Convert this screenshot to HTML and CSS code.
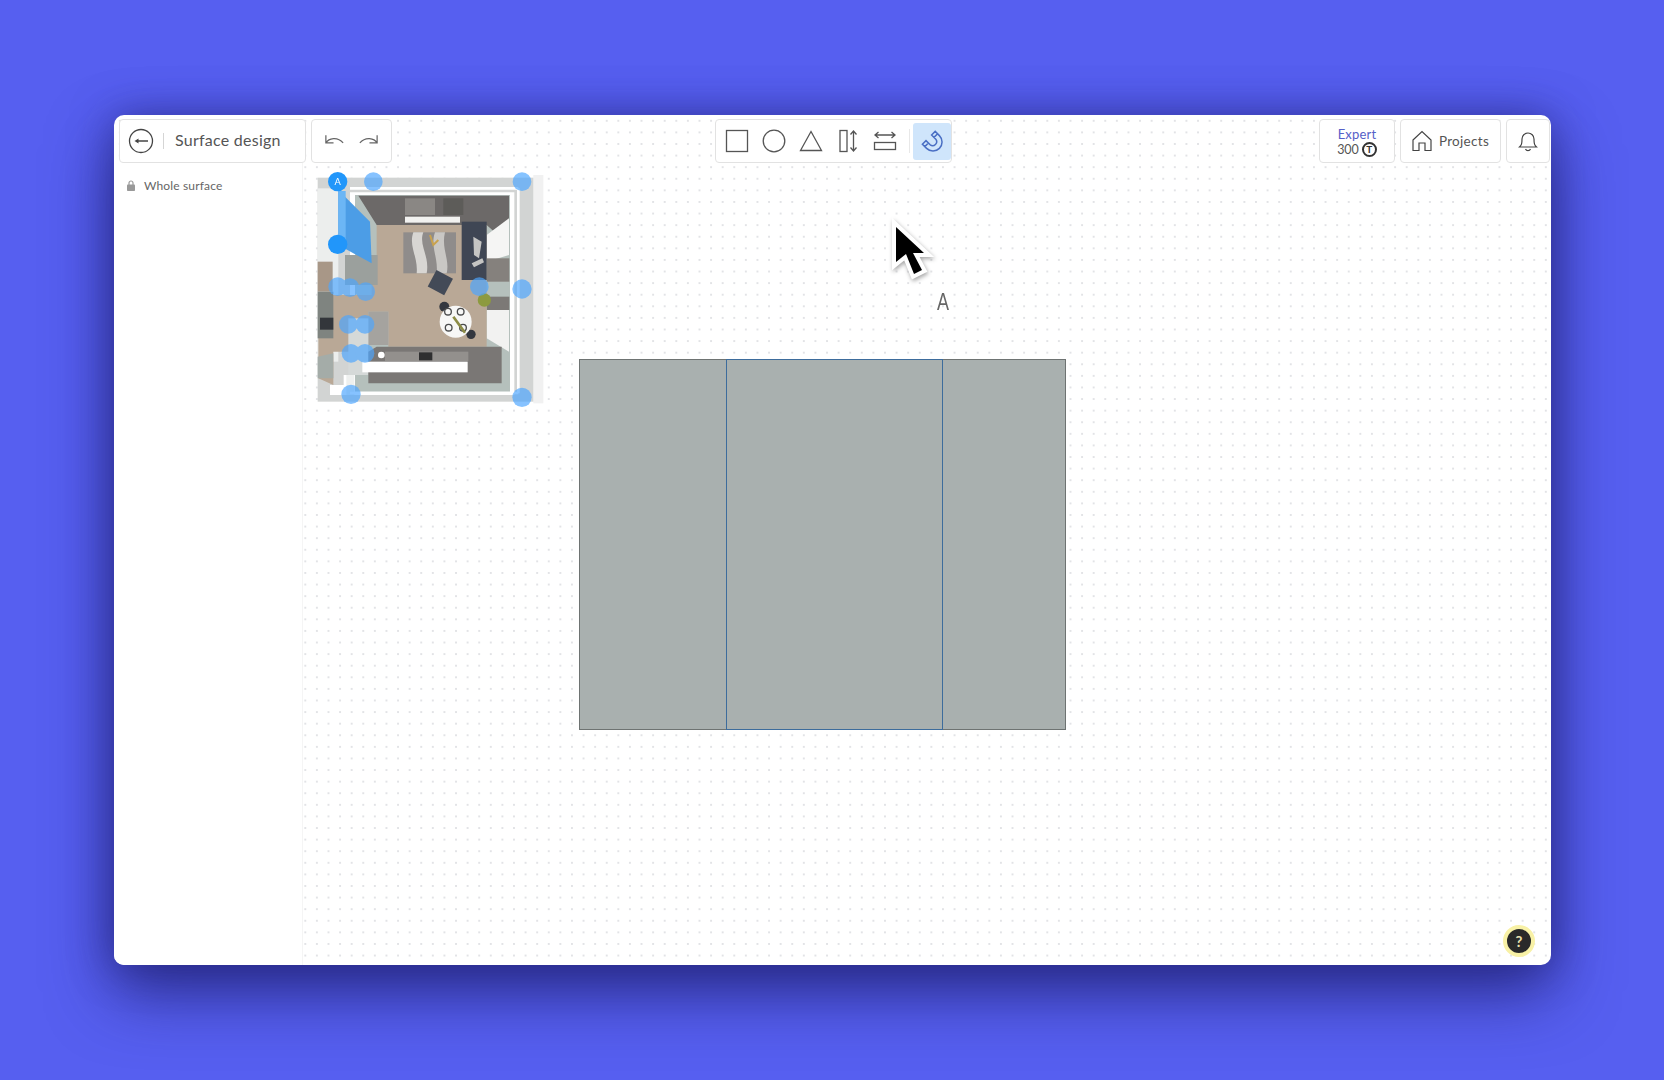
FILE: index.html
```html
<!DOCTYPE html>
<html lang="en">
<head>
<meta charset="utf-8">
<title>Surface design</title>
<link rel="stylesheet" href="styles.css">
</head>
<body>
<div class="window">
  <header class="topbar">
    <div class="group">
      <div class="panel title-panel">
        <svg class="back" viewBox="0 0 26 26"><circle cx="13" cy="13" r="11.5"/><path d="M20 13H9"/><path class="back-head" d="M6.500 13 10.500 10.500V15.500Z"/></svg>
        <span class="divider"></span>
        <span class="title">Surface design</span>
      </div>
      <div class="panel history">
        <svg class="hist" viewBox="0 0 24 16"><path d="M3 2v8h8M3 10c3-5 12-7 18 0"/></svg>
        <svg class="hist" viewBox="0 0 24 16"><path d="M21 2v8h-8M21 10c-3-5-12-7-18 0"/></svg>
      </div>
    </div>
    <div class="panel tools">
      <span class="tool"><svg viewBox="0 0 24 24"><rect x="1.500" y="1.500" width="21" height="21"/></svg></span>
      <span class="tool"><svg viewBox="0 0 24 24"><circle cx="12" cy="12" r="10.800"/></svg></span>
      <span class="tool"><svg viewBox="0 0 24 24"><path d="M12 2.500 22.500 21.500h-21z"/></svg></span>
      <span class="tool"><svg viewBox="0 0 24 24"><rect x="4" y="1.500" width="7" height="21"/><path d="M17.500 2v20M14.500 5.500 17.500 2l3 3.500M14.500 18.500l3 3.500 3-3.500"/></svg></span>
      <span class="tool"><svg viewBox="0 0 24 24"><rect x="1.500" y="13.500" width="21" height="7"/><path d="M2 6h20M5.500 3 2 6l3.500 3M18.500 3 22 6l-3.500 3"/></svg></span>
      <span class="tool-sep"></span>
      <span class="tool active"><svg viewBox="0 0 24 24"><path d="M14.200 1.400 18.400 5.600A9 9 0 0 1 5.600 18.400L1.400 14.200 5 10.600 9.200 14.800A4 4 0 0 0 14.800 9.200L10.600 5ZM16.600 3.800 13 7.400M3.800 16.600 7.400 13" transform="translate(1 1)"/></svg></span>
    </div>
    <div class="group end">
      <div class="panel expert">
        <span class="expert-name">Expert</span>
        <span class="expert-credits">300 <span class="coin">T</span></span>
      </div>
      <div class="panel projects">
        <svg class="home" viewBox="0 0 20 22"><path d="M1 10 10 1.500 19 10v10.500h-6V13H7v7.500H1z"/></svg>
        <span>Projects</span>
      </div>
      <div class="panel bell-panel">
        <svg class="bell" viewBox="0 0 20 22"><path d="M1.500 17c2-2 2.500-3 2.500-8a6 6 0 0 1 12 0c0 5 .5 6 2.500 8zM7.500 19a2.700 2.700 0 0 0 5 0"/></svg>
      </div>
    </div>
  </header>
  <main class="workspace">
    <aside class="sidebar">
      <div class="layer">
        <svg class="lock" viewBox="0 0 8 11"><path class="shackle" d="M2 5V3a2 2 0 0 1 4 0v2"/><rect y="4.500" width="8" height="6.500" rx=".8"/></svg>
        <span>Whole surface</span>
      </div>
    </aside>
    <section class="canvas">
      <svg class="plan" viewBox="0 0 735 735">
        <rect x="685" y="30" width="30" height="685" fill="#f1f1f1"/>
        <rect x="38" y="38" width="647" height="672" fill="#d2d4d3"/>
        <rect x="38" y="70" width="62" height="520" fill="#eceeed"/>
        <path d="M135 82H628V690H75V660L135 660V82Z" fill="#fff"/>
        <rect x="150" y="90" width="465" height="590" fill="#b5c0bc"/>
        <path d="M160 92H612V240L545 180H215Z" fill="#6c6968"/>
        <rect x="300" y="100" width="90" height="50" fill="#8a8784"/>
        <rect x="415" y="100" width="60" height="50" fill="#5d5c59"/>
        <rect x="300" y="155" width="165" height="18" fill="#f2f2f0"/>
        <path d="M545 210 612 160V270L545 290Z" fill="#f5f5f4"/>
        <path d="M545 435H612V560L545 520Z" fill="#f2f2f1"/>
        <rect x="545" y="280" width="68" height="70" fill="#85817d"/>
        <rect x="545" y="395" width="68" height="40" fill="#7c7976"/>
        <path d="M215 180H545V545H250V440H190V560H85V660L40 640V390H200V300L215 300Z" fill="#b9a896"/>
        <rect x="38" y="290" width="45" height="90" fill="#a89787"/>
        <rect x="38" y="380" width="47" height="140" fill="#7f8480"/>
        <rect x="45" y="458" width="40" height="36" fill="#33363b"/>
        <path d="M38 575 85 565V640H38Z" fill="#a4aca8"/>
        <rect x="120" y="270" width="98" height="90" fill="#9ba09d"/>
        <rect x="190" y="440" width="60" height="100" fill="#a5a39f"/>
        <rect x="130" y="460" width="60" height="170" fill="#d5d9d8"/>
        <rect x="120" y="630" width="28" height="60" fill="#eef0ef"/>
        <path d="M215 545H590V655H190V560Z" fill="#7a7775"/>
        <rect x="240" y="560" width="250" height="28" fill="#93908d"/>
        <rect x="342" y="562" width="40" height="24" fill="#2f2f30"/>
        <rect x="172" y="590" width="316" height="32" fill="#fff"/>
        <circle cx="229" cy="570" r="10" fill="#fff"/>
        <path d="M640 70V685M135 70H640M135 684H640M120 630V690" stroke="#fff" stroke-width="8" fill="none"/>
        <rect x="295" y="202" width="158" height="123" fill="#8f8c8b"/>
        <path d="M325 202h30c-15 40 20 70 10 123h-30c5-50-25-80-10-123z" fill="#d8d6d3"/>
        <path d="M390 202h30c-12 50 15 80 5 123h-30c5-50-20-80-5-123z" fill="#c9c7c4"/>
        <path d="M375 210l10 30 15-15" stroke="#c9a24e" stroke-width="6" fill="none"/>
        <rect x="470" y="170" width="75" height="175" fill="#3f4654"/>
        <path d="M505 215l25 15-8 50-15-10zM500 295l32-15 5 12-30 15z" fill="#c5c5c3"/>
        <rect x="378" y="325" width="56" height="56" fill="#434a57" transform="rotate(28 406 353)"/>
        <circle cx="418" cy="425" r="15" fill="#33373f"/>
        <circle cx="498" cy="508" r="14" fill="#33373f"/>
        <circle cx="452" cy="470" r="48" fill="#f7f7f6"/>
        <g fill="none" stroke="#4b4c4d" stroke-width="4">
          <circle cx="429" cy="440" r="10"/><circle cx="467" cy="440" r="10"/><circle cx="431" cy="488" r="10"/><circle cx="474" cy="488" r="10"/>
        </g>
        <path d="M445 455l35 48" stroke="#8b8b45" stroke-width="8"/>
        <circle cx="538" cy="405" r="20" fill="#8d9a3f"/>
        <path d="M100 75 195 170 200 295 100 240Z" fill="#4c9de6"/>
        <rect x="100" y="78" width="22" height="165" fill="#6cb6f5"/>
        <g class="handle-soft">
          <circle cx="205" cy="50" r="28"/><circle cx="651" cy="50" r="28"/><circle cx="98" cy="365" r="28"/><circle cx="135" cy="368" r="28"/><circle cx="182" cy="380" r="28"/><circle cx="523" cy="365" r="28"/><circle cx="651" cy="372" r="29"/><circle cx="130" cy="478" r="28"/><circle cx="180" cy="478" r="28"/><circle cx="138" cy="565" r="28"/><circle cx="180" cy="565" r="28"/><circle cx="138" cy="688" r="29"/><circle cx="651" cy="697" r="29"/>
        </g>
        <circle cx="98" cy="50" r="29" fill="#2196fa"/>
        <circle cx="98" cy="238" r="29" fill="#2196fa"/>
        <text x="98" y="60" class="handle-label">A</text>
      </svg>
      <div class="surface">
        <div class="surface-selected"></div>
      </div>
      <svg class="cursor" viewBox="0 0 120 120"><path d="M36 17V52L46 44 54 64 62 60 53 43H64Z" fill="#000" stroke="#fff" stroke-width="8" stroke-linejoin="miter" paint-order="stroke"/></svg>
      <span class="cursor-letter">A</span>
      <button class="help">?</button>
    </section>
  </main>
</div>
</body>
</html>
```
FILE: styles.css
```css
* { box-sizing: border-box; }
html, body { margin: 0; height: 100%; }
body {
  background: #565ff0;
  padding: 115px 113px 115px 114px;
  font-family: "Lato", "Liberation Sans", sans-serif;
  overflow: hidden;
}
.window {
  height: 850px;
  display: flex;
  flex-direction: column;
  border-radius: 10px;
  background-color: #fff;
  background-image: radial-gradient(circle, #e2e3e6 0.7px, transparent 1px);
  background-size: 11.6px 11.6px;
  box-shadow: 0 0 40px rgba(35, 35, 120, .55), 0 28px 65px rgba(30, 30, 110, .75);
  overflow: hidden;
}
.topbar {
  display: grid;
  grid-template-columns: 1fr auto 1fr;
  padding: 4px 1px 0 5px;
  height: 48px;
  flex: none;
}
.group { display: flex; gap: 5px; }
.group.end { justify-content: flex-end; }
.panel {
  display: flex;
  align-items: center;
  height: 44px;
  background: #fff;
  border: 1px solid #e2e2e2;
  border-radius: 4px;
}
.title-panel { width: 187px; padding-left: 8px; }
.back { width: 26px; height: 26px; fill: none; stroke: #444; stroke-width: 1.300; flex: none; }
.back-head { fill: #444; stroke: none; }
.divider { width: 1px; height: 16px; background: #d5d5d5; margin: 0 11px 0 9px; }
.title { font-size: 16px; line-height: 18px; margin-top: -2px; color: #555; letter-spacing: .25px; white-space: nowrap; }
.history { width: 81px; justify-content: space-between; padding: 0 11px; }
.hist { width: 23px; height: 16px; fill: none; stroke: #666; stroke-width: 1.300; }
.tools { width: 237px; padding: 0 3px; margin-right: 3px; }
.tool { width: 37px; height: 37px; display: flex; align-items: center; justify-content: center; flex: none; }
.tool svg { width: 24px; height: 24px; fill: none; stroke: #555; stroke-width: 1.300; }
.tool-sep { width: 1px; height: 24px; background: #e8e8e8; margin: 0 3px 0 5px; flex: none; }
.tool.active { background: #cfe5fb; border-radius: 3px; width: 38px; }
.tool.active svg { stroke: #4a6fc4; stroke-width: 1.500; }
.expert {
  width: 76px;
  flex-direction: column;
  justify-content: center;
  line-height: 16px;
}
.expert-name { font-size: 13px; color: #5560c8; letter-spacing: .2px; margin-top: 1px; }
.expert-credits { font-size: 12.500px; color: #555; display: flex; align-items: center; gap: 3px; }
.coin {
  width: 15px; height: 15px; border: 2px solid #333; border-radius: 50%;
  font-size: 10px; line-height: 11px; text-align: center; font-weight: 700; color: #333;
}
.projects { width: 101px; justify-content: center; gap: 7px; font-size: 13.500px; color: #555; letter-spacing: .3px; }
.home { width: 20px; height: 22px; fill: none; stroke: #444; stroke-width: 1.200; }
.bell-panel { width: 44px; justify-content: center; }
.bell { width: 20px; height: 22px; fill: none; stroke: #444; stroke-width: 1.200; }
.workspace { flex: 1; display: flex; min-height: 0; }
.sidebar {
  width: 189px;
  flex: none;
  background: #fff;
  border-right: 1px solid #f5f5f5;
  padding: 15px 0 0 13px;
}
.layer { display: flex; align-items: center; gap: 9px; font-size: 12px; color: #666; letter-spacing: .15px; }
.lock { width: 8px; height: 11px; fill: #999; }
.shackle { fill: none; stroke: #999; stroke-width: 1.200; }
.canvas { flex: 1; position: relative; }
.plan { position: absolute; left: 2px; top: 2px; width: 245px; height: 245px; filter: blur(.5px); }
.handle-soft { fill: #4da6ff; opacity: .68; }
.handle-label { font-size: 28px; fill: #fff; text-anchor: middle; font-family: "Lato", sans-serif; }
.surface {
  position: absolute;
  left: 276px;
  top: 196px;
  width: 487px;
  height: 371px;
  background: #a9b0af;
  border: 1px solid #6e7372;
}
.surface-selected {
  position: absolute;
  left: 146px;
  top: -1px;
  width: 217px;
  height: 371px;
  border: 1px solid #3d6c9c;
}
.cursor { position: absolute; left: 557px; top: 47px; width: 120px; height: 120px; filter: drop-shadow(1px 2px 2px rgba(0,0,0,.35)); overflow: visible; }
.cursor-letter {
  position: absolute;
  left: 632px;
  top: 125px;
  font-family: "Liberation Sans", sans-serif;
  font-size: 24px;
  line-height: 28px;
  color: #666;
  transform: scaleX(.75);
}
.help {
  position: absolute;
  right: 16px;
  bottom: 8px;
  width: 32px;
  height: 32px;
  padding: 0;
  border-radius: 50%;
  border: 4px solid #f8f1a6;
  background: #2a2a2a;
  color: #e8e2b0;
  font-family: "Lato", sans-serif;
  font-size: 15px;
  font-weight: 700;
}
```
